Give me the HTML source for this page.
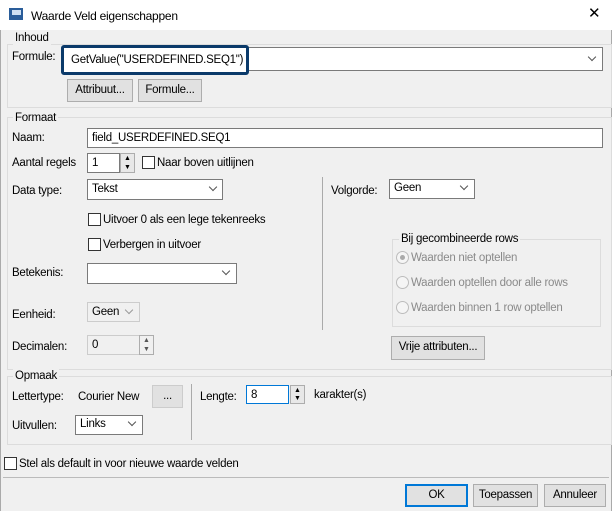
<!DOCTYPE html>
<html><head><style>
body{margin:0;width:612px;height:511px;overflow:hidden;background:#f0f0f0;font-family:"Liberation Sans",sans-serif;font-size:11.5px;letter-spacing:-0.25px;color:#000;position:relative}
.a{position:absolute}
.t{position:absolute;white-space:nowrap;line-height:14px}
.grp{position:absolute;border:1px solid #dcdcdc}
.gl{position:absolute;background:#f0f0f0;padding:0 2px;line-height:14px;white-space:nowrap}
.inp{position:absolute;background:#fff;border:1px solid #7a7a7a;box-sizing:border-box}
.btn{position:absolute;background:#e1e1e1;border:1px solid #adadad;box-sizing:border-box;text-align:center;line-height:20px}
.cb{position:absolute;width:11px;height:11px;border:1px solid #333;background:#fff}
.chev{position:absolute;width:5px;height:5px;border-right:1px solid #555;border-bottom:1px solid #555;transform:rotate(45deg)}
.rad{position:absolute;width:11px;height:11px;border:1px solid #bcbcbc;border-radius:50%;background:#f5f5f5}
.dis{color:#8a8a8a}
.spin{position:absolute;width:15px;box-sizing:border-box;border:1px solid #adadad;background:#e8e8e8}
</style></head><body>
<div class="a" style="left:0;top:0;width:612px;height:30px;background:#fff"></div>
<div class="a" style="left:9px;top:8px;width:14px;height:12px;background:#2a5d9a"></div>
<div class="a" style="left:12px;top:10px;width:9px;height:5px;background:#cfe0f3"></div>
<div class="t" style="left:31px;top:9px;font-size:12px">Waarde Veld eigenschappen</div>
<div class="t" style="left:588px;top:7px;font-size:15px">✕</div>
<div class="a" style="left:0;top:30px;width:1px;height:481px;background:#aaa"></div>
<div class="a" style="left:611px;top:30px;width:1px;height:481px;background:#aaa"></div>

<div class="grp" style="left:7px;top:44px;width:603px;height:62px"></div>
<div class="gl" style="left:13px;top:31px">Inhoud</div>
<div class="t" style="left:12px;top:50px">Formule:</div>
<div class="inp" style="left:62px;top:47px;width:541px;height:24px"></div>
<div class="a" style="left:61px;top:45px;width:182px;height:24px;border:3px solid #0b3a6a;border-radius:3px;background:#fff"></div>
<div class="t" style="left:71px;top:53px">GetValue("USERDEFINED.SEQ1")</div>
<div class="chev" style="left:589px;top:54px"></div>
<div class="btn" style="left:67px;top:79px;width:66px;height:23px">Attribuut...</div>
<div class="btn" style="left:138px;top:79px;width:64px;height:23px">Formule...</div>

<div class="grp" style="left:7px;top:117px;width:603px;height:251px"></div>
<div class="gl" style="left:13px;top:111px">Formaat</div>
<div class="t" style="left:12px;top:131px">Naam:</div>
<div class="inp" style="left:87px;top:128px;width:516px;height:20px"></div>
<div class="t" style="left:92px;top:131px">field_USERDEFINED.SEQ1</div>
<div class="t" style="left:12px;top:156px">Aantal regels</div>
<div class="inp" style="left:87px;top:153px;width:33px;height:20px"></div>
<div class="t" style="left:92px;top:156px">1</div>
<div class="spin" style="left:120px;top:153px;height:20px"></div>
<div class="t" style="left:124px;top:152px;font-size:7px">▲</div>
<div class="t" style="left:124px;top:161px;font-size:7px">▼</div>
<div class="cb" style="left:142px;top:156px"></div>
<div class="t" style="left:157px;top:156px">Naar boven uitlijnen</div>
<div class="t" style="left:12px;top:184px">Data type:</div>
<div class="inp" style="left:87px;top:179px;width:136px;height:21px"></div>
<div class="t" style="left:92px;top:182px">Tekst</div>
<div class="chev" style="left:210px;top:184px"></div>
<div class="cb" style="left:88px;top:213px"></div>
<div class="t" style="left:103px;top:213px">Uitvoer 0 als een lege tekenreeks</div>
<div class="cb" style="left:88px;top:238px"></div>
<div class="t" style="left:103px;top:238px">Verbergen in uitvoer</div>
<div class="t" style="left:12px;top:266px">Betekenis:</div>
<div class="inp" style="left:87px;top:263px;width:150px;height:21px"></div>
<div class="chev" style="left:223px;top:268px"></div>
<div class="t" style="left:12px;top:308px">Eenheid:</div>
<div class="a" style="left:87px;top:302px;width:53px;height:20px;border:1px solid #ccc;box-sizing:border-box"></div>
<div class="t" style="left:92px;top:305px">Geen</div>
<div class="chev" style="left:126px;top:307px;border-color:#999"></div>
<div class="t" style="left:12px;top:340px">Decimalen:</div>
<div class="a" style="left:87px;top:335px;width:53px;height:20px;border:1px solid #ccc;box-sizing:border-box;background:#f0f0f0"></div>
<div class="t" style="left:92px;top:338px">0</div>
<div class="spin" style="left:139px;top:335px;height:20px;background:#f0f0f0"></div>
<div class="t" style="left:143px;top:334px;font-size:7px;color:#555">▲</div>
<div class="t" style="left:143px;top:343px;font-size:7px;color:#555">▼</div>

<div class="a" style="left:322px;top:177px;width:1px;height:153px;background:#aaa"></div>
<div class="t" style="left:331px;top:184px">Volgorde:</div>
<div class="inp" style="left:389px;top:179px;width:86px;height:20px"></div>
<div class="t" style="left:394px;top:181px">Geen</div>
<div class="chev" style="left:461px;top:183px"></div>
<div class="grp" style="left:392px;top:239px;width:207px;height:86px"></div>
<div class="gl" style="left:399px;top:232px">Bij gecombineerde rows</div>
<div class="rad" style="left:396px;top:251px"></div>
<div class="a" style="left:400px;top:255px;width:5px;height:5px;border-radius:50%;background:#aaa"></div>
<div class="t dis" style="left:411px;top:251px">Waarden niet optellen</div>
<div class="rad" style="left:396px;top:276px"></div>
<div class="t dis" style="left:411px;top:276px">Waarden optellen door alle rows</div>
<div class="rad" style="left:396px;top:301px"></div>
<div class="t dis" style="left:411px;top:301px">Waarden binnen 1 row optellen</div>
<div class="btn" style="left:391px;top:336px;width:94px;height:24px">Vrije attributen...</div>

<div class="grp" style="left:7px;top:376px;width:603px;height:67px"></div>
<div class="gl" style="left:13px;top:369px">Opmaak</div>
<div class="t" style="left:12px;top:390px">Lettertype:</div>
<div class="t" style="left:78px;top:390px">Courier New</div>
<div class="btn" style="left:152px;top:385px;width:31px;height:23px;background:#e1e1e1;border-color:#ccc">...</div>
<div class="a" style="left:191px;top:384px;width:1px;height:56px;background:#aaa"></div>
<div class="t" style="left:200px;top:390px">Lengte:</div>
<div class="inp" style="left:246px;top:385px;width:43px;height:19px;border-color:#0078d7"></div>
<div class="t" style="left:251px;top:388px">8</div>
<div class="spin" style="left:290px;top:385px;height:19px"></div>
<div class="t" style="left:294px;top:384px;font-size:7px">▲</div>
<div class="t" style="left:294px;top:392px;font-size:7px">▼</div>
<div class="t" style="left:314px;top:388px">karakter(s)</div>
<div class="t" style="left:12px;top:419px">Uitvullen:</div>
<div class="inp" style="left:75px;top:415px;width:68px;height:20px"></div>
<div class="t" style="left:80px;top:417px">Links</div>
<div class="chev" style="left:129px;top:419px"></div>

<div class="cb" style="left:4px;top:457px"></div>
<div class="t" style="left:19px;top:457px">Stel als default in voor nieuwe waarde velden</div>
<div class="a" style="left:3px;top:477px;width:606px;height:1px;background:#bbb"></div>
<div class="btn" style="left:405px;top:484px;width:63px;height:23px;border:2px solid #0078d7;line-height:19px">OK</div>
<div class="btn" style="left:473px;top:484px;width:65px;height:23px">Toepassen</div>
<div class="btn" style="left:544px;top:484px;width:62px;height:23px">Annuleer</div>
</body></html>
